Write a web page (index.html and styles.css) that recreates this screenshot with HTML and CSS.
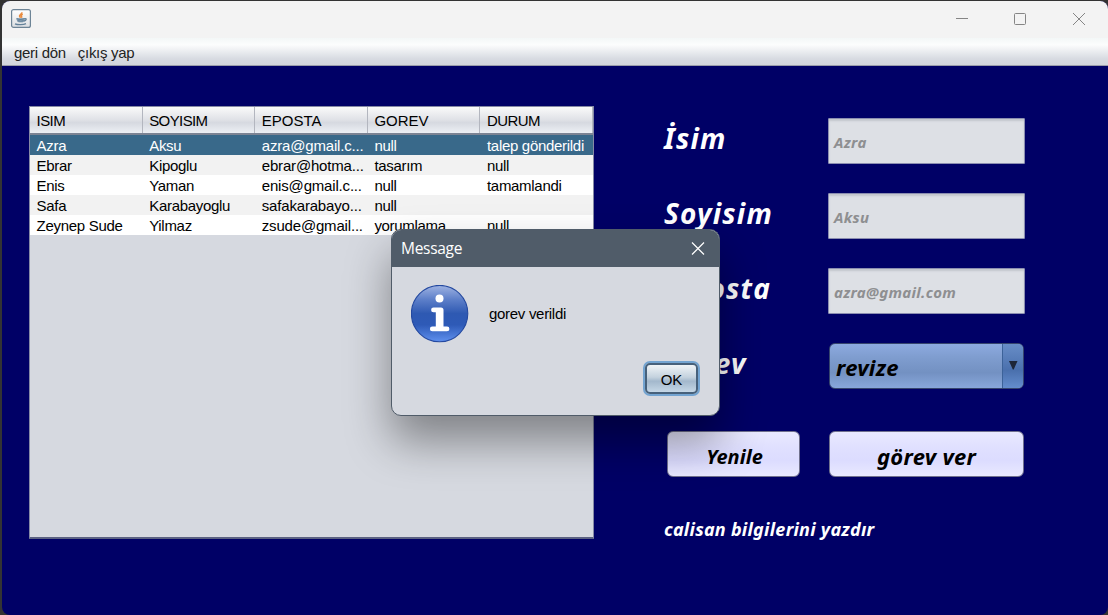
FILE: index.html
```html
<!DOCTYPE html>
<html lang="tr">
<head>
<meta charset="utf-8">
<title>Message</title>
<link rel="stylesheet" href="styles.css">
</head>
<body>
<div class="window">
  <header class="titlebar">
    <svg class="java" width="20" height="19" viewBox="0 0 20 19">
      <defs><linearGradient id="jb" x1="0" y1="0" x2="0" y2="1"><stop offset="0" stop-color="#fff"/><stop offset="1" stop-color="#dcdfe2"/></linearGradient></defs>
      <rect x=".6" y=".6" width="18.8" height="17.8" rx="2" fill="url(#jb)" stroke="#6d8496" stroke-width="1.2"/>
      <path d="M10.800 3.200c.6 1.800-3 2.500-2.200 4.200.3.600.9.800 1.100 1.300M11.800 5.300c-1.600.6-2 1.300-1.200 2.200.4.500.1.800-.2 1.200" fill="none" stroke="#ea8c40" stroke-width="1.500"/>
      <path d="M5.500 9.300h8.500c0 2.500-1 4-2.500 4.200H8c-1.500-.2-2.500-1.700-2.500-4.200z" fill="#9bb0bf"/>
      <path d="M5.500 9.700c2 .7 6 .6 8.200 0M6.500 11.700c2 .6 4.500.6 6.300 0M13.800 9.600c2.200-.3 1.600 1.900-.8 2.400M4 14.800c2.500 1.200 8.500 1.100 11-.2" fill="none" stroke="#64829a" stroke-width="1.300"/>
    </svg>
    <div class="controls">
      <svg width="14" height="14" viewBox="0 0 14 14"><path d="M2 6.500h12"/></svg>
      <svg width="14" height="14" viewBox="0 0 14 14"><rect x="1.500" y="1.500" width="11" height="11" rx="1"/></svg>
      <svg width="14" height="14" viewBox="0 0 14 14"><path d="M1 1l12 12M13 1L1 13"/></svg>
    </div>
  </header>
  <nav class="menubar"><span class="menu-back">geri dön</span><span class="menu-exit">çıkış yap</span></nav>
  <main class="content">
    <section class="table">
      <div class="row head"><span class="tight">ISIM</span><span class="tight">SOYISIM</span><span>EPOSTA</span><span>GOREV</span><span class="tight">DURUM</span></div>
      <div class="row selected"><span>Azra</span><span>Aksu</span><span class="mail">azra@gmail.c...</span><span>null</span><span>talep gönderildi</span></div>
      <div class="row alt"><span>Ebrar</span><span>Kipoglu</span><span class="mail">ebrar@hotma...</span><span>tasarım</span><span>null</span></div>
      <div class="row"><span>Enis</span><span>Yaman</span><span class="mail">enis@gmail.c...</span><span>null</span><span>tamamlandi</span></div>
      <div class="row alt"><span>Safa</span><span>Karabayoglu</span><span class="mail">safakarabayo...</span><span>null</span><span></span></div>
      <div class="row"><span>Zeynep Sude</span><span>Yilmaz</span><span class="mail">zsude@gmail...</span><span>yorumlama</span><span>null</span></div>
    </section>
    <section class="form">
      <div class="line"><label>İsim</label><div class="field">Azra</div></div>
      <div class="line"><label>Soyisim</label><div class="field">Aksu</div></div>
      <div class="line"><label>E-posta</label><div class="field">azra@gmail.com</div></div>
      <div class="line"><label>Görev</label>
        <div class="combo"><span class="combo-value">revize</span><span class="combo-arrow"><svg width="9" height="9" viewBox="0 0 9 9"><path d="M0 0h8.500L4.700 8.500h-.9z" fill="#1d2638"/></svg></span></div>
      </div>
      <div class="actions"><div class="button refresh">Yenile</div><div class="button assign">görev ver</div></div>
      <div class="print"><span>calisan bilgilerini yazdır</span></div>
    </section>
  </main>
</div>
<div class="dialog">
  <div class="dialog-title"><span>Message</span>
    <svg width="14" height="14" viewBox="0 0 14 14"><path d="M1 .5l12 12M13 .5L1 12.500" stroke="#fff" stroke-width="1.200"/></svg>
  </div>
  <div class="dialog-body">
    <div class="message">
      <svg width="58" height="58" viewBox="0 0 58 58">
        <defs><linearGradient id="ib" x1="0" y1="0" x2="0" y2="1"><stop offset="0" stop-color="#9fb3e2"/><stop offset=".25" stop-color="#5d7fc9"/><stop offset=".5" stop-color="#2e59b2"/><stop offset=".7" stop-color="#2e5ab7"/><stop offset="1" stop-color="#5f90ee"/></linearGradient></defs>
        <circle cx="28.600" cy="28.600" r="28.200" fill="url(#ib)" stroke="#2449a0" stroke-width="1.100"/>
        <circle cx="28.500" cy="13.500" r="4" fill="#fff"/>
        <path d="M22.500 22.500h7.500q2.500 0 2.500 2.500v16.500h3.500a2.400 2.400 0 0 1 0 4.800H21.300a2.400 2.400 0 0 1 0-4.800h3.500V27.300h-2.300a2.400 2.400 0 0 1 0-4.800z" fill="#fff"/>
      </svg>
      <span>gorev verildi</span>
    </div>
    <div class="ok">OK</div>
  </div>
</div>
</body>
</html>
```
FILE: styles.css
```css
* { box-sizing: border-box; }
body {
  margin: 0;
  width: 1108px;
  height: 615px;
  padding: 1px 0 0 2px;
  overflow: hidden;
  background: #333;
  font: 15px/20px "Liberation Sans", sans-serif;
  letter-spacing: -.3px;
  color: #000;
}
.window {
  height: 614px;
  border-radius: 8px;
  overflow: hidden;
  background: #000066;
  display: flex;
  flex-direction: column;
}
.titlebar {
  height: 37px;
  background: #f3f3f3;
  display: flex;
  justify-content: space-between;
  padding: 8px 22px 0 9px;
}
.controls { display: flex; gap: 45px; padding-top: 3px; }
.controls svg { fill: none; stroke: #858585; stroke-width: 1; }
.menubar {
  height: 28px;
  border-bottom: 1px solid #9a9daa;
  background: linear-gradient(#f3f7f7, #fcfdfd 25%, #d7dae1 78%, #d3d6dc);
  display: flex;
  gap: 12px;
  padding: 5px 12px 0;
  color: #232323;
}
.content {
  flex: 1;
  display: flex;
  align-items: flex-start;
  gap: 70px;
  padding: 40px 0 0 27px;
}
.table {
  width: 565px;
  height: 433px;
  background: #d6d9e0;
  border: 1px solid #8589a5;
  border-bottom: 2px solid #5b6182;
}
.row {
  height: 20px;
  display: grid;
  grid-template-columns: repeat(5, 112.6px);
  overflow: hidden;
  background: #fff;
  line-height: 21px;
  white-space: nowrap;
}
.row span { padding-left: 6.6px; }
.row .mail { letter-spacing: -.18px; }
.row.alt { background: #f2f2f2; }
.row.selected { background: #39698a; color: #fff; }
.row.head {
  height: 28px;
  line-height: 27px;
  letter-spacing: 0;
  border-bottom: 2px solid #7c8494;
  background: linear-gradient(#fafafa, #dfe1e6 50%, #d6d9e0 60%, #edf0f5);
}
.row.head span { border-right: 1px solid #b3b6bf; }
.row.head .tight { letter-spacing: -.6px; }
.form {
  width: 361px;
  padding-top: 12px;
  font-family: "Noto Sans", "Open Sans", sans-serif;
  font-weight: bold;
  font-style: italic;
  letter-spacing: .3px;
}
.line { height: 75px; display: flex; justify-content: space-between; }
.line label { color: #fff; font-size: 28px; line-height: 40px; letter-spacing: 1.2px; }
.field {
  width: 197px;
  height: 46px;
  padding: 0 5px;
  border: 1px solid #8b8eb0;
  border-radius: 1px;
  background: #dde0e5;
  box-shadow: inset 0 2px 2px #c3c7cd;
  color: #8e8f91;
  font-size: 15px;
  line-height: 46px;
}
.combo {
  width: 195px;
  height: 46px;
  margin-right: 1px;
  border: 1px solid #36456d;
  border-radius: 6px;
  overflow: hidden;
  display: flex;
  background: linear-gradient(#8daae0, #7f9dcf 30%, #7391c2 65%, #88a7db);
}
.combo-value { flex: 1; padding-left: 6px; font-size: 22px; line-height: 47px; }
.combo-arrow {
  width: 21px;
  border-left: 1px solid #3c6299;
  background: linear-gradient(#688dc7, #4a70ad 60%, #648dcd);
  padding: 17px 0 0 6px;
  line-height: 0;
}
.actions { display: flex; justify-content: space-between; padding: 13px 1px 0 3px; }
.button {
  height: 46px;
  border: 1px solid #70718e;
  border-radius: 6px;
  background: linear-gradient(#e9e9ff, #e0e0ff 35%, #dcdcff 65%, #e9e9ff);
  text-align: center;
}
.refresh { width: 133px; font-size: 20px; letter-spacing: 0; line-height: 49px; padding-left: 2px; }
.assign { width: 195px; font-size: 22px; line-height: 49px; }
.print { color: #fff; font-size: 18px; line-height: 24px; padding-top: 40px; letter-spacing: .25px; }
.dialog {
  position: absolute;
  left: 391px;
  top: 229px;
  width: 329px;
  height: 187px;
  border: 1px solid #505c69;
  border-radius: 10px;
  background: #d6d9e0;
  overflow: hidden;
  box-shadow: 0 25px 45px rgba(0, 0, 0, .4);
}
.dialog-title {
  height: 37px;
  padding: 0 14px 0 9px;
  display: flex;
  justify-content: space-between;
  align-items: center;
  background: #505c69;
  color: #fff;
  font: 15.5px/37px "Open Sans", sans-serif;
}
.dialog-body { display: flex; flex-direction: column; padding: 18px 19px 0; }
.message { display: flex; align-items: center; gap: 20px; height: 58px; }
.ok {
  align-self: flex-end;
  width: 53px;
  height: 31px;
  margin-top: 20px;
  margin-right: 2px;
  border: 2px solid #47617b;
  border-radius: 5px;
  box-shadow: 0 0 0 2px #73a4d1;
  background: linear-gradient(#f0f4f7, #c4d2de 45%, #a3b8cc 60%, #c5d7e6);
  text-align: center;
  line-height: 29px;
  letter-spacing: 0;
}
```
